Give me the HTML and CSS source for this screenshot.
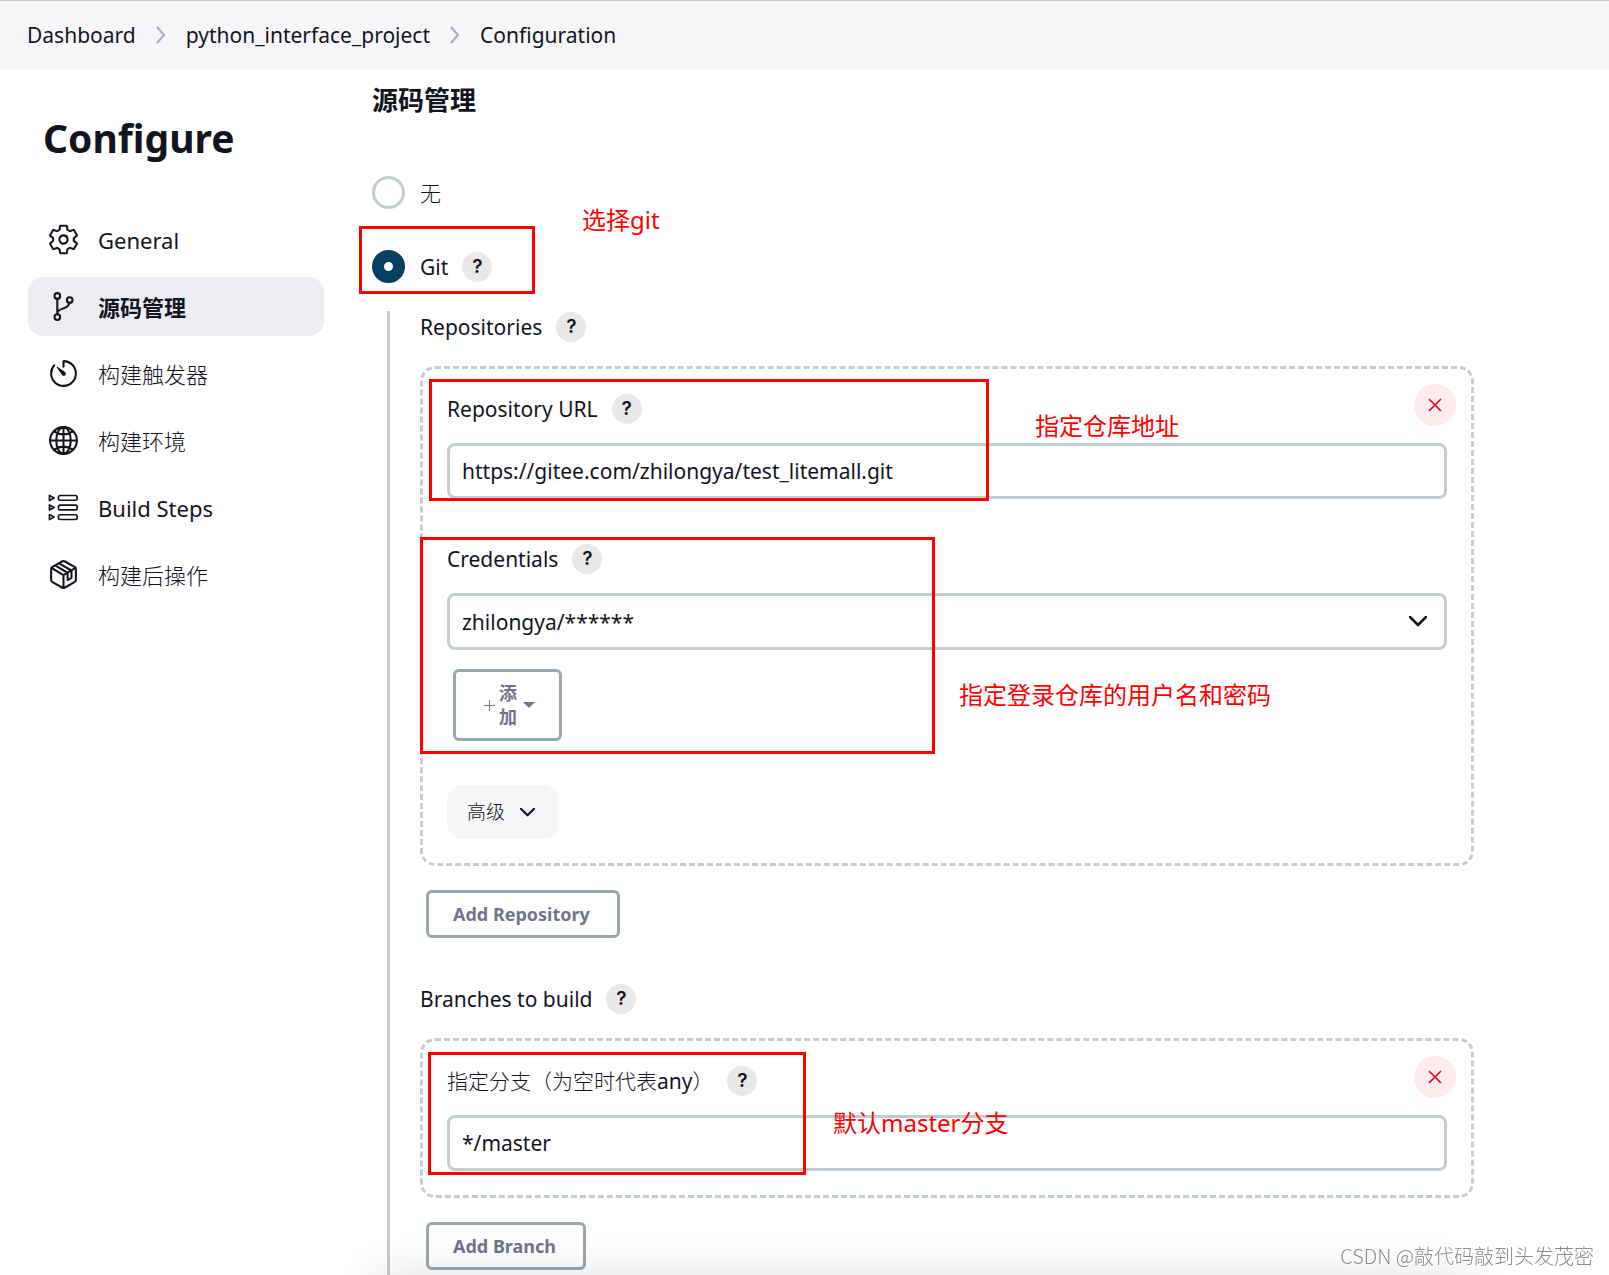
FILE: index.html
```html
<!DOCTYPE html>
<html lang="zh-CN">
<head>
<meta charset="utf-8">
<title>python_interface_project Configuration</title>
<link rel="stylesheet" href="styles.css">
</head>
<body>
<header class="topbar">
  <nav class="breadcrumbs" aria-label="Breadcrumb">
    <a href="#">Dashboard</a>
    <svg class="crumb-sep" viewBox="0 0 10 18"><path d="M1 1l7 8-7 8"/></svg>
    <a href="#">python_interface_project</a>
    <svg class="crumb-sep" viewBox="0 0 10 18"><path d="M1 1l7 8-7 8"/></svg>
    <a href="#">Configuration</a>
  </nav>
</header>

<div class="layout">
  <aside class="sidebar">
    <h1>Configure</h1>
    <nav class="tasks" aria-label="Sections">
      <a class="task" href="#">
        <svg class="icon" viewBox="0 0 512 512"><path d="M262.29 192.31a64 64 0 1057.4 57.4 64.13 64.13 0 00-57.4-57.4zM416.39 256a154.34 154.34 0 01-1.53 20.79l45.21 35.46a10.81 10.81 0 012.45 13.75l-42.77 74a10.81 10.81 0 01-13.14 4.59l-44.9-18.08a16.11 16.11 0 00-15.17 1.75A164.48 164.48 0 01325 400.8a15.94 15.94 0 00-8.82 12.14l-6.73 47.89a11.08 11.08 0 01-10.68 9.17h-85.54a11.11 11.11 0 01-10.69-8.87l-6.72-47.82a16.07 16.07 0 00-9-12.22 155.3 155.3 0 01-21.46-12.57 16 16 0 00-15.11-1.71l-44.89 18.07a10.81 10.81 0 01-13.14-4.58l-42.77-74a10.8 10.8 0 012.45-13.75l38.21-30a16.05 16.05 0 006-14.08c-.36-4.17-.58-8.33-.58-12.5s.21-8.27.58-12.35a16 16 0 00-6.07-13.94l-38.19-30A10.81 10.81 0 0149.48 186l42.77-74a10.81 10.81 0 0113.14-4.59l44.9 18.08a16.11 16.11 0 0015.17-1.75A164.48 164.48 0 01187 111.2a15.94 15.94 0 008.82-12.14l6.73-47.89A11.08 11.08 0 01213.23 42h85.54a11.11 11.11 0 0110.69 8.87l6.72 47.82a16.07 16.07 0 009 12.22 155.3 155.3 0 0121.46 12.57 16 16 0 0015.11 1.71l44.89-18.07a10.81 10.81 0 0113.14 4.58l42.77 74a10.8 10.8 0 01-2.45 13.75l-38.21 30a16.05 16.05 0 00-6.05 14.08c.33 4.14.55 8.3.55 12.47z"/></svg>
        <span>General</span>
      </a>
      <a class="task task-active" href="#">
        <svg class="icon" viewBox="0 0 512 512"><circle cx="160" cy="92" r="44"/><circle cx="160" cy="420" r="44"/><circle cx="352" cy="156" r="44"/><path d="M160 376V136M346 200c-10 110-150 60-184 150"/></svg>
        <span>源码管理</span>
      </a>
      <a class="task" href="#">
        <svg class="icon" viewBox="0 0 512 512"><path d="M112.91 128A191.85 191.85 0 0064 254c-1.18 106.35 85.65 193.8 192 194 106.2.2 192-85.83 192-192 0-104.54-83.55-189.61-187.5-192a4.36 4.36 0 00-4.5 4.37V152"/><path class="solid" d="M233.38 278.63l-79-113a8.13 8.13 0 0111.32-11.32l113 79a32.5 32.5 0 01-37.25 53.26 33.21 33.21 0 01-8.07-7.94z"/></svg>
        <span class="light">构建触发器</span>
      </a>
      <a class="task" href="#">
        <svg class="icon" viewBox="0 0 512 512"><circle cx="256" cy="256" r="208"/><path d="M256 48c-58.07 0-112.67 93.13-112.67 208S197.93 464 256 464s112.67-93.13 112.67-208S314.07 48 256 48zM117.33 117.33c38.24 27.15 86.38 43.34 138.67 43.34s100.43-16.19 138.67-43.34M394.67 394.67c-38.24-27.15-86.38-43.34-138.67-43.34s-100.43 16.19-138.67 43.34M256 48v416M464 256H48"/></svg>
        <span class="light">构建环境</span>
      </a>
      <a class="task" href="#">
        <svg class="icon icon-fine" viewBox="0 0 512 512"><rect x="178" y="70" width="290" height="74" rx="26"/><rect x="178" y="219" width="290" height="74" rx="26"/><rect x="178" y="368" width="290" height="74" rx="26"/><path d="M38 68v78l72-39zM38 217v78l72-39zM38 366v78l72-39z"/></svg>
        <span>Build Steps</span>
      </a>
      <a class="task" href="#">
        <svg class="icon" viewBox="0 0 512 512"><path d="M448 341.37V170.61A32 32 0 00432.11 143l-152-88.46a47.94 47.94 0 00-48.24 0L79.89 143A32 32 0 0064 170.61v170.76A32 32 0 0079.89 369l152 88.46a48 48 0 0048.24 0l152-88.46A32 32 0 00448 341.37zM69 154l187 110 187-110M256 464V264M127 116l193 113v112l60-34V194L186 82"/></svg>
        <span class="light">构建后操作</span>
      </a>
    </nav>
  </aside>

  <main class="content">
    <h2>源码管理</h2>
    <form class="scm">
      <div class="choice">
        <input type="radio" name="scm" id="scm-none">
        <label class="light" for="scm-none">无</label>
      </div>
      <div class="choice">
        <input type="radio" name="scm" id="scm-git" checked>
        <label for="scm-git">Git</label>
        <a class="help" href="#">?</a>
      </div>

      <div class="nested">
        <section class="group">
          <div class="label-row"><span>Repositories</span><a class="help" href="#">?</a></div>
          <div class="chunk">
            <button type="button" class="remove" aria-label="Delete"><svg viewBox="0 0 14 14"><path d="M1 1l12 12M13 1L1 13"/></svg></button>
            <div class="field">
              <div class="label-row"><label for="repo-url">Repository URL</label><a class="help" href="#">?</a></div>
              <input class="control" type="text" id="repo-url" value="https://gitee.com/zhilongya/test_litemall.git">
            </div>
            <div class="field">
              <div class="label-row"><label for="credentials">Credentials</label><a class="help" href="#">?</a></div>
              <div class="select">
                <select class="control" id="credentials"><option>zhilongya/******</option></select>
                <svg class="chevron" viewBox="0 0 18 11"><path d="M1 1l8 8 8-8"/></svg>
              </div>
              <button type="button" class="outline-button add-credential">
                <svg class="plus" viewBox="0 0 10 10"><path d="M5 0v10M0 5h10"/></svg>
                <span class="stacked">添加</span>
                <svg class="caret" viewBox="0 0 12 6"><path d="M0 0h12L6 6z"/></svg>
              </button>
            </div>
            <button type="button" class="advanced light">高级 <svg class="chevron chevron-small" viewBox="0 0 18 11"><path d="M1 1l8 8 8-8"/></svg></button>
          </div>
          <button type="button" class="outline-button">Add Repository</button>
        </section>

        <section class="group">
          <div class="label-row"><span>Branches to build</span><a class="help" href="#">?</a></div>
          <div class="chunk">
            <button type="button" class="remove" aria-label="Delete"><svg viewBox="0 0 14 14"><path d="M1 1l12 12M13 1L1 13"/></svg></button>
            <div class="field">
              <div class="label-row"><label for="branch"><span class="light">指定分支（为空时代表</span>any<span class="light">）</span></label><a class="help" href="#">?</a></div>
              <input class="control" type="text" id="branch" value="*/master">
            </div>
          </div>
          <button type="button" class="outline-button">Add Branch</button>
        </section>
      </div>
    </form>

    <div class="mark mark-git"></div>
    <p class="note note-git">选择git</p>
    <div class="mark mark-url"></div>
    <p class="note note-url">指定仓库地址</p>
    <div class="mark mark-credentials"></div>
    <p class="note note-credentials">指定登录仓库的用户名和密码</p>
    <div class="mark mark-branch"></div>
    <p class="note note-branch">默认master分支</p>
    <div class="bottom-shade"></div>
  </main>
</div>
<div class="watermark">CSDN @敲代码敲到头发茂密</div>
</body>
</html>
```

FILE: styles.css
```css
:root {
  --ink: #14141f;
  --line: #c3ccd1;
  --outline: #9ba7af;
  --muted: #73738c;
  --font: "Noto Sans", "Noto Sans CJK SC", sans-serif;
}

* { box-sizing: border-box; }

body {
  margin: 0;
  min-height: 100vh;
  display: flex;
  flex-direction: column;
  overflow-x: hidden;
  background: #fff;
  color: var(--ink);
  font: 21px/30px var(--font);
}

a { color: inherit; text-decoration: none; }
button, input, select { font: inherit; color: inherit; margin: 0; }
svg { display: block; flex: none; fill: none; stroke: currentColor; }
.light { font-weight: 300; }

.topbar {
  height: 69px;
  border-top: 1px solid #ccccd0;
  background: #f6f6f9;
  padding: 0 27px;
  display: flex;
  align-items: center;
}
.breadcrumbs { display: flex; align-items: center; gap: 20px; }
.crumb-sep { width: 10px; height: 18px; stroke: #a9a9be; stroke-width: 2; }

.layout { flex: 1; display: flex; overflow: hidden; }

.sidebar { width: 372px; flex: none; padding: 39px 48px 0 28px; }
.sidebar h1 { margin: 0 0 42px; padding-left: 15px; font-size: 39px; line-height: 60px; }
.tasks { display: flex; flex-direction: column; gap: 8px; }
.task {
  height: 59px;
  padding: 0 19px;
  border-radius: 15px;
  display: flex;
  align-items: center;
  gap: 18px;
  font-size: 22px;
}
.task-active { background: #ecedf3; font-weight: 700; }
.icon { width: 33px; height: 33px; stroke-width: 32; stroke-linejoin: round; stroke-linecap: round; }
.icon-fine { stroke-width: 26; }
.icon .solid { fill: currentColor; stroke: none; }

.content { flex: 1; position: relative; margin-right: 135px; padding-top: 11px; display: flex; flex-direction: column; }
.content h2 { margin: 0 0 56px; font-size: 26px; line-height: 40px; }
.scm { flex: 1; display: flex; flex-direction: column; }

.choice { display: flex; align-items: center; height: 33px; margin-bottom: 41px; }
.choice + .choice { margin-bottom: 28px; }
.choice input {
  appearance: none;
  width: 33px;
  height: 33px;
  margin-right: 15px;
  border: 3px solid var(--line);
  border-radius: 50%;
  background: #fff;
}
.choice input:checked { border: 12px solid #073f63; }

.help {
  width: 30px;
  height: 30px;
  margin-left: 14px;
  border-radius: 50%;
  background: #e8e8e8;
  font: 600 19px/30px Inter, sans-serif;
  text-align: center;
}

.nested { flex: 1; margin-left: 15px; padding: 1px 0 5px 30px; border-left: 3px solid var(--line); display: flex; flex-direction: column; gap: 46px; }
.label-row { display: flex; align-items: center; height: 30px; }
.group > .label-row { margin-bottom: 24px; }

.chunk {
  position: relative;
  border: 3px dashed var(--line);
  border-radius: 15px;
  padding: 25px 24px 24px;
  margin-bottom: 24px;
}
.field + .field { margin-top: 45px; }
.control {
  display: block;
  width: 100%;
  height: 56px;
  margin-top: 19px;
  padding: 0 12px;
  border: 3px solid var(--line);
  border-radius: 8px;
  background: #fff;
}
.select { display: grid; align-items: end; }
.select .control { grid-area: 1 / 1; height: 57px; appearance: none; }
.select .chevron { grid-area: 1 / 1; justify-self: end; margin: 0 20px 23px 0; pointer-events: none; }
.chevron { width: 18px; height: 11px; stroke-width: 2.6; stroke-linecap: round; stroke-linejoin: round; }
.chevron-small { width: 15px; height: 9px; }

.remove {
  position: absolute;
  top: 15px;
  right: 15px;
  width: 42px;
  height: 42px;
  border: 0;
  border-radius: 50%;
  background: #fdebed;
  color: #e6001f;
  display: grid;
  place-items: center;
  padding: 0;
}
.remove svg { width: 14px; height: 14px; stroke-width: 1.6; }

.outline-button {
  display: flex;
  align-items: center;
  height: 48px;
  margin-left: 6px;
  padding: 0 27px 0 24px;
  border: 3px solid var(--outline);
  border-radius: 6px;
  background: transparent;
  color: var(--muted);
  font-size: 18px;
  font-weight: 700;
  line-height: 24px;
}
.add-credential { height: 72px; margin-top: 19px; padding: 0 24px 0 28px; gap: 4px; }
.plus { width: 11px; height: 11px; stroke-width: 1; }
.stacked { width: 18px; margin-right: 2px; word-break: break-all; }
.caret { width: 12px; height: 6px; fill: currentColor; stroke: none; }

.advanced {
  display: flex;
  align-items: center;
  gap: 15px;
  height: 54px;
  margin-top: 44px;
  padding: 0 23px 0 20px;
  border: 0;
  border-radius: 15px;
  background: #f6f6f9;
  font-size: 19px;
  font-weight: 300;
}

/* red call-outs drawn over the form */
.mark { position: absolute; border: 3px solid #f00; pointer-events: none; }
.note { position: absolute; margin: 0; color: #f00; font-size: 24px; line-height: 36px; white-space: nowrap; }
.mark-git { left: -13px; top: 157px; width: 176px; height: 68px; }
.note-git { left: 210px; top: 133px; }
.mark-url { left: 57px; top: 310px; width: 560px; height: 122px; }
.note-url { left: 663px; top: 339px; }
.mark-credentials { left: 48px; top: 468px; width: 515px; height: 217px; }
.note-credentials { left: 587px; top: 608px; }
.mark-branch { left: 56px; top: 983px; width: 378px; height: 123px; }
.note-branch { left: 461px; top: 1036px; }

.bottom-shade {
  position: absolute;
  left: 0;
  right: 0;
  bottom: -60px;
  height: 60px;
  box-shadow: 0 -4px 45px rgba(0, 0, 0, 0.1);
  pointer-events: none;
}

.watermark {
  position: fixed;
  right: 15px;
  bottom: 4px;
  color: #8c8c8c;
  font: 300 20px/30px "Noto Sans CJK SC", sans-serif;
  text-shadow: 1px 1px 0 #fff;
}
```
